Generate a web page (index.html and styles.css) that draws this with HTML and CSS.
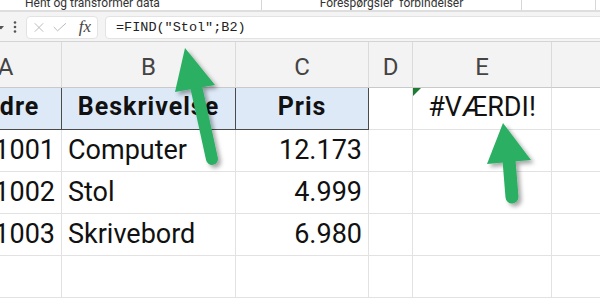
FILE: index.html
```html
<!DOCTYPE html>
<html lang="da">
<head>
    <meta charset="UTF-8">
    <title>FIND fejl</title>
    <link rel="stylesheet" href="styles.css">
</head>
<body>
    <div class="ribbon">
        <div class="group g1"><span>Hent og transformer data</span></div>
        <div class="group g2"><span>Forespørgsler  forbindelser</span></div>
        <div class="group g3"></div>
    </div>

    <div class="formula-bar">
        <svg class="caret" width="6" height="6" viewBox="0 0 6 6"><path d="M0 1 L3 4.5 L6 1 Z" fill="#555"/></svg>
        <svg class="dots" width="4" height="12" viewBox="0 0 4 12"><circle cx="2" cy="1.5" r="1.3" fill="#555"/><circle cx="2" cy="6" r="1.3" fill="#555"/><circle cx="2" cy="10.5" r="1.3" fill="#555"/></svg>
        <div class="fx-box">
            <svg width="13" height="13" viewBox="0 0 13 13"><path d="M1 1 L12 12 M12 1 L1 12" stroke="#b5b5b5" stroke-width="1.2" fill="none"/></svg>
            <svg width="18" height="12" viewBox="0 0 18 12"><path d="M1 6 L6 11 L17 1" stroke="#b5b5b5" stroke-width="1.2" fill="none"/></svg>
            <span class="fx">fx</span>
        </div>
        <div class="formula-input">=FIND("Stol";B2)</div>
    </div>

    <div class="grid">
        <div class="col-head">A</div>
        <div class="col-head">B</div>
        <div class="col-head">C</div>
        <div class="col-head">D</div>
        <div class="col-head">E</div>
        <div class="col-head">F</div>

        <div class="cell title">Ordre</div>
        <div class="cell title">Beskrivelse</div>
        <div class="cell title last">Pris</div>
        <div class="cell"></div>
        <div class="cell error">#VÆRDI!</div>
        <div class="cell"></div>

        <div class="cell num">1001</div>
        <div class="cell">Computer</div>
        <div class="cell num">12.173</div>
        <div class="cell"></div>
        <div class="cell"></div>
        <div class="cell"></div>

        <div class="cell num">1002</div>
        <div class="cell">Stol</div>
        <div class="cell num">4.999</div>
        <div class="cell"></div>
        <div class="cell"></div>
        <div class="cell"></div>

        <div class="cell num">1003</div>
        <div class="cell">Skrivebord</div>
        <div class="cell num">6.980</div>
        <div class="cell"></div>
        <div class="cell"></div>
        <div class="cell"></div>

        <div class="cell"></div>
        <div class="cell"></div>
        <div class="cell"></div>
        <div class="cell"></div>
        <div class="cell"></div>
        <div class="cell"></div>
    </div>

    <!-- callout arrows drawn over the sheet -->
    <svg class="arrows" width="600" height="298" viewBox="0 0 600 298">
        <defs>
            <filter id="shadow" x="-50%" y="-50%" width="200%" height="200%">
                <feDropShadow dx="3" dy="3" stdDeviation="2" flood-color="#000" flood-opacity="0.35"/>
            </filter>
        </defs>
        <g filter="url(#shadow)" fill="#2aaf64" stroke="#2aaf64">
            <line x1="196" y1="86" x2="212" y2="159" stroke-width="12" stroke-linecap="round"/>
            <polygon points="185,48 175,92 215,85" stroke="none"/>
            <line x1="509" y1="160" x2="512" y2="197" stroke-width="13" stroke-linecap="round"/>
            <polygon points="503,123 487,164 531,160" stroke="none"/>
        </g>
    </svg>
</body>
</html>
```

FILE: styles.css
```css
body {
    margin: 0;
    width: 600px;
    height: 298px;
    overflow: hidden;
    position: relative;
    background: #fff;
    font-family: Roboto, "Liberation Sans", sans-serif;
}
.ribbon {
    display: flex;
    height: 10px;
    overflow: hidden;
    background: #fff;
    border-bottom: 2px solid #dedede;
}
.group {
    display: flex;
    align-items: flex-end;
    border-right: 1px solid #d6d6d6;
    font-size: 12px;
    line-height: 14px;
    color: #333;
    white-space: pre;
}
.g1 {
    width: 262px;
    padding-left: 25px;
    box-sizing: border-box;
}
.g2 {
    width: 259px;
    justify-content: center;
}
.g3 {
    width: 73px;
}
.formula-bar {
    display: flex;
    align-items: center;
    height: 30px;
    padding-top: 1px;
    background: #f4f4f4;
    border-bottom: 1px solid #d4d4d4;
    box-sizing: border-box;
}
.caret {
    margin-left: -2px;
    margin-top: 2px;
}
.dots {
    margin-left: 9px;
}
.fx-box {
    display: flex;
    align-items: center;
    gap: 9px;
    height: 23px;
    margin-left: 9px;
    padding: 0 6px 0 7px;
    width: 72px;
    box-sizing: border-box;
    background: #fff;
    border: 1px solid #e3e3e3;
    border-radius: 4px;
}
.fx {
    font-family: "Liberation Serif", serif;
    font-style: italic;
    font-size: 17px;
    color: #444;
    margin-left: 3px;
}
.formula-input {
    flex: 1;
    height: 23px;
    margin-left: 7px;
    margin-right: -4px;
    padding-left: 10px;
    box-sizing: border-box;
    background: #fff;
    border: 1px solid #e3e3e3;
    border-radius: 4px;
    font-family: "Liberation Mono", monospace;
    font-size: 13.5px;
    line-height: 21px;
    color: #222;
}
.grid {
    display: grid;
    grid-template-columns: 112px 174px 133px 44px 139px 139px;
    grid-template-rows: 46px repeat(5, 42px);
    margin-left: -50px;
}
.col-head {
    display: flex;
    justify-content: center;
    align-items: flex-end;
    padding-bottom: 6px;
    box-sizing: border-box;
    background: #f3f3f3;
    border-right: 1px solid #dadada;
    border-bottom: 1px solid #c9c9c9;
    font-size: 24px;
    line-height: 28px;
    color: #444;
}
.cell {
    display: flex;
    align-items: flex-end;
    padding: 0 6px 5px 6px;
    box-sizing: border-box;
    border-right: 1px solid #e2e2e2;
    border-bottom: 1px solid #e2e2e2;
    font-size: 27px;
    line-height: 32px;
    color: #111;
    white-space: nowrap;
    position: relative;
}
.num {
    justify-content: flex-end;
}
.title {
    justify-content: center;
    background: #dde9f7;
    border-right-color: #4a4a4a;
    border-bottom-color: #4a4a4a;
    font-weight: bold;
    font-size: 25px;
    letter-spacing: 1px;
    padding-bottom: 6px;
}
.error {
    justify-content: center;
    padding-bottom: 6px;
}
.error::before {
    content: "";
    position: absolute;
    left: 0;
    top: 0;
    border-top: 8px solid #1e7b34;
    border-right: 8px solid transparent;
}
.arrows {
    position: absolute;
    left: 0;
    top: 0;
}
```
